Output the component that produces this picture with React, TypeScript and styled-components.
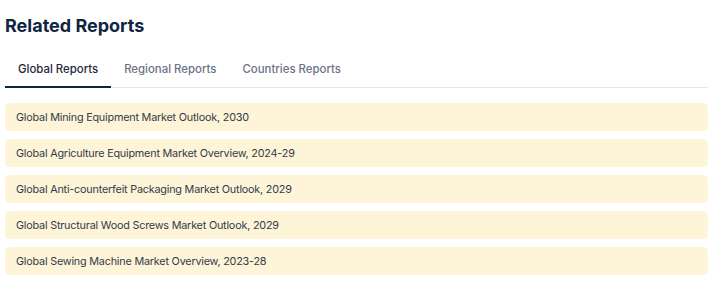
import React, { useState } from "react";
import styled, { createGlobalStyle } from "styled-components";

const Global = createGlobalStyle`
  html, body { margin: 0; padding: 0; background: #ffffff; }
  body { font-family: Inter, "Noto Sans", Arial, sans-serif; }
`;

const Wrapper = styled.section`
  padding: 14px 4px 0 5px;
`;

const Title = styled.h2`
  margin: 0;
  font-size: 18px;
  line-height: 24px;
  font-weight: 700;
  color: #0f2542;
`;

const TabBar = styled.div`
  display: flex;
  margin-top: 17px;
  border-bottom: 1px solid #e5e7eb;
`;

const Tab = styled.button<{ $active?: boolean }>`
  border: none;
  background: none;
  font-family: inherit;
  font-size: 11.4px;
  line-height: 14px;
  font-weight: 500;
  padding: 7px 13px 10px;
  margin-bottom: -1px;
  cursor: pointer;
  color: ${(p) => (p.$active ? "#1f2937" : "#6b7385")};
  border-bottom: 2px solid ${(p) => (p.$active ? "#0f2542" : "transparent")};
`;

const List = styled.ul`
  list-style: none;
  margin: 15px 0 0;
  padding: 0;
  display: flex;
  flex-direction: column;
  gap: 8px;
`;

const Item = styled.li`
  height: 28px;
  display: flex;
  align-items: center;
  padding: 0 11px;
  border-radius: 5px;
  background: #fef4d8;
  font-size: 10.8px;
  letter-spacing: -0.2px;
  color: #333c4a;
`;

const tabs = ["Global Reports", "Regional Reports", "Countries Reports"];
const reports = [
  "Global Mining Equipment Market Outlook, 2030",
  "Global Agriculture Equipment Market Overview, 2024-29",
  "Global Anti-counterfeit Packaging Market Outlook, 2029",
  "Global Structural Wood Screws Market Outlook, 2029",
  "Global Sewing Machine Market Overview, 2023-28",
];

export default function App() {
  const [active, setActive] = useState(0);
  return (
    <>
      <Global />
      <Wrapper>
        <Title>Related Reports</Title>
        <TabBar>
          {tabs.map((t, i) => (
            <Tab key={t} $active={i === active} onClick={() => setActive(i)}>
              {t}
            </Tab>
          ))}
        </TabBar>
        <List>
          {reports.map((r) => (
            <Item key={r}>{r}</Item>
          ))}
        </List>
      </Wrapper>
    </>
  );
}
